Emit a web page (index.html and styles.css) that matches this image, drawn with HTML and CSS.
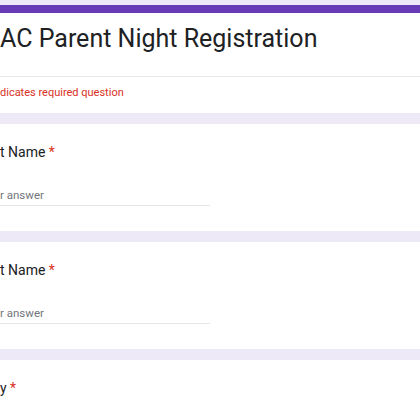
FILE: index.html
```html
<!DOCTYPE html>
<html lang="en">
<head>
<meta charset="utf-8">
<title>AC Parent Night Registration</title>
<link rel="stylesheet" href="styles.css">
</head>
<body>
<main class="form">
  <section class="card header-card">
    <h1 class="form-title">AC Parent Night Registration</h1>
    <div class="required-note">dicates required question</div>
  </section>
  <section class="card question">
    <div class="q-label">t Name <span class="req">*</span></div>
    <div class="answer"><span class="placeholder">r answer</span></div>
  </section>
  <section class="card question">
    <div class="q-label">t Name <span class="req">*</span></div>
    <div class="answer"><span class="placeholder">r answer</span></div>
  </section>
  <section class="card question">
    <div class="q-label">y <span class="req">*</span></div>
  </section>
</main>
</body>
</html>
```
FILE: styles.css
```css
* { box-sizing: border-box; }
html, body { margin: 0; padding: 0; }
body {
  background: #ede9f6;
  font-family: Roboto, "Liberation Sans", sans-serif;
  color: #202124;
  height: 420px;
  overflow: hidden;
}
.form {
  display: flex;
  flex-direction: column;
  gap: 11px;
  padding-top: 5px;
}
.card {
  background: #fff;
}
.header-card {
  border-top: 8px solid #673ab7;
}
.form-title {
  margin: 0;
  padding: 10px 0 21px;
  font-size: 25px;
  line-height: 32px;
  font-weight: 400;
  color: #202124;
  white-space: nowrap;
}
.required-note {
  border-top: 1px solid #e8e8ea;
  padding: 8px 0 12px;
  font-size: 11px;
  line-height: 16px;
  color: #d93025;
}
.question {
  padding: 18px 0 25px;
}
.question:last-child {
  padding-bottom: 60px;
}
.q-label {
  font-size: 14px;
  line-height: 20px;
  color: #202124;
}
.req { color: #d93025; }
.answer {
  margin-top: 24px;
  width: 210px;
  padding-bottom: 1px;
  border-bottom: 1px solid #e6e6e6;
}
.placeholder {
  display: block;
  font-size: 11.5px;
  line-height: 18px;
  color: #70757a;
}
```
